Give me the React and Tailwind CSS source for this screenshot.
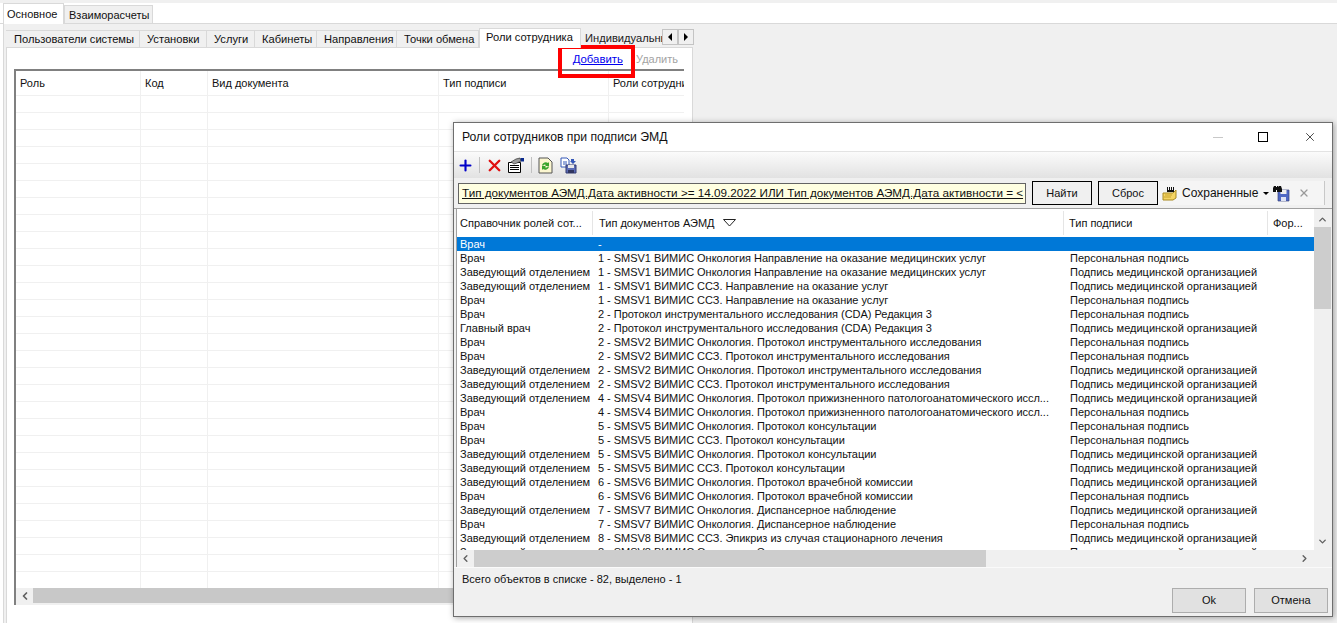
import { ChevronLeft, ChevronRight, ChevronUp, ChevronDown, X, Plus } from "lucide-react";

const ZAV = "Заведующий отделением";
const VR = "Врач";
const PERS = "Персональная подпись";
const MED = "Подпись медицинской организацией";
const ONK4 = "4 - SMSV4 ВИМИС Онкология. Протокол прижизненного патологоанатомического иссл...";

const rows = [
  [VR, "-", ""],
  [VR, "1 - SMSV1 ВИМИС Онкология Направление на оказание медицинских услуг", PERS],
  [ZAV, "1 - SMSV1 ВИМИС Онкология Направление на оказание медицинских услуг", MED],
  [ZAV, "1 - SMSV1 ВИМИС ССЗ. Направление на оказание услуг", MED],
  [VR, "1 - SMSV1 ВИМИС ССЗ. Направление на оказание услуг", PERS],
  [VR, "2 - Протокол инструментального исследования (CDA) Редакция 3", PERS],
  ["Главный врач", "2 - Протокол инструментального исследования (CDA) Редакция 3", MED],
  [VR, "2 - SMSV2 ВИМИС Онкология. Протокол инструментального исследования", PERS],
  [VR, "2 - SMSV2 ВИМИС ССЗ. Протокол инструментального исследования", PERS],
  [ZAV, "2 - SMSV2 ВИМИС Онкология. Протокол инструментального исследования", MED],
  [ZAV, "2 - SMSV2 ВИМИС ССЗ. Протокол инструментального исследования", MED],
  [ZAV, ONK4, MED],
  [VR, ONK4, PERS],
  [VR, "5 - SMSV5 ВИМИС Онкология. Протокол консультации", PERS],
  [VR, "5 - SMSV5 ВИМИС ССЗ. Протокол консультации", PERS],
  [ZAV, "5 - SMSV5 ВИМИС Онкология. Протокол консультации", MED],
  [ZAV, "5 - SMSV5 ВИМИС ССЗ. Протокол консультации", MED],
  [ZAV, "6 - SMSV6 ВИМИС Онкология. Протокол врачебной комиссии", MED],
  [VR, "6 - SMSV6 ВИМИС Онкология. Протокол врачебной комиссии", PERS],
  [ZAV, "7 - SMSV7 ВИМИС Онкология. Диспансерное наблюдение", MED],
  [VR, "7 - SMSV7 ВИМИС Онкология. Диспансерное наблюдение", PERS],
  [ZAV, "8 - SMSV8 ВИМИС ССЗ. Эпикриз из случая стационарного лечения", MED],
  [ZAV, "8 - SMSV8 ВИМИС Онкология. Эпикриз из случая стационарного лечения", MED],
];

const innerTabs = [
  ["Пользователи системы", "w-[134px] pl-[8px]"],
  ["Установки", "w-[67px] pl-[7px]"],
  ["Услуги", "w-[48px] pl-[7px]"],
  ["Кабинеты", "w-[62px] pl-[7px]"],
  ["Направления", "w-[80px] pl-[7px]"],
  ["Точки обмена", "w-[82px] pl-[7px]"],
];

const leftColumns = ["w-[125px]", "w-[67px]", "w-[231px]", "w-[170px]", "w-[76px]"];

const TabArrow = ({ children }) => (
  <div className="w-[16px] h-[16px] bg-[#f0f0f0] border border-[#c4c4c4] flex items-center justify-center">
    {children}
  </div>
);

const MainContent = () => (
  <div className="w-full h-[623px] flex flex-col">
    <div className="h-[24px] shrink-0 bg-white border-b border-[#d9d9d9] flex flex-col">
      <div className="h-[3px] shrink-0 bg-[#f0f0f0]" />
      <div className="flex-1 flex items-end pl-[3px]">
        <div className="w-[61px] h-[21px] -mb-px bg-white border border-b-0 border-[#d9d9d9] pl-[3px] pt-[2px] relative">Основное</div>
        <div className="w-[89px] h-[18px] bg-[#f0f0f0] border border-b-0 border-[#d9d9d9] pl-[4px] pt-[1px]">Взаиморасчеты</div>
      </div>
    </div>
    <div className="flex-1 flex min-h-0">
      <div className="w-[3px] bg-white" />
      <div className="w-[691px] border-l border-[#d9d9d9] pl-[2px] pt-[4px] flex flex-col">
        <div className="h-[19px] shrink-0 flex items-end relative z-10 text-[11.15px]">
          {innerTabs.map(([label, width]) => (
            <div key={label} className={`${width} h-[17px] bg-[#f0f0f0] border-r border-t border-[#d9d9d9] leading-[16px] whitespace-nowrap`}>
              {label}
            </div>
          ))}
          <div className="w-[102px] h-[20px] -mb-px bg-white border border-b-0 border-[#d9d9d9] pl-[6px] leading-[17px] whitespace-nowrap">Роли сотрудника</div>
          <div className="w-[81px] h-[17px] overflow-hidden whitespace-nowrap pl-[4px] leading-[17px] text-[#222]">Индивидуальные</div>
          <div className="flex self-start mt-[1px]">
            <TabArrow><span className="w-0 h-0 border-y-[4px] border-y-transparent border-r-[4px] border-r-black" /></TabArrow>
            <TabArrow><span className="w-0 h-0 border-y-[4px] border-y-transparent border-l-[4px] border-l-black" /></TabArrow>
          </div>
        </div>
        <div className="flex-1 w-[687px] bg-white border-l border-t border-r border-[#d9d9d9] pl-[7px] pr-[8px] flex flex-col">
          <div className="h-[21px] shrink-0 flex justify-end items-center gap-[13px] pr-[6px] pt-[2px]">
            <span className="text-[#0000ee] underline text-[11.4px]">Добавить</span>
            <span className="text-[#a3a3a3]">Удалить</span>
          </div>
          <div className="h-[536px] border-l-2 border-t-2 border-[#808080] flex flex-col overflow-hidden">
            <div className="h-[25px] shrink-0 flex border-b border-[#f0f0f0]">
              {["Роль", "Код", "Вид документа", "Тип подписи", "Роли сотрудника"].map((label, i) => (
                <div key={label} className={`${leftColumns[i]} shrink-0 border-r border-[#f0f0f0] pl-[4px] pt-[4px] whitespace-nowrap overflow-hidden`}>
                  {label}
                </div>
              ))}
            </div>
            <div className="flex-1 overflow-hidden">
              {Array.from({ length: 29 }, (_, n) => (
                <div key={n} className="h-[17px] flex border-b border-[#f0f0f0]">
                  {leftColumns.map((w) => (
                    <div key={w} className={`${w} shrink-0 border-r border-[#f0f0f0]`} />
                  ))}
                </div>
              ))}
            </div>
            <div className="h-[15px] shrink-0 bg-[#f0f0f0] flex items-center">
              <div className="w-[17px] flex justify-center">
                <ChevronLeft size={12} strokeWidth={3.5} className="text-[#606060]" />
              </div>
              <div className="h-full flex-1 bg-[#c8c8c8]" />
            </div>
            <div className="h-[2px] shrink-0 bg-[#f0f0f0]" />
          </div>
        </div>
      </div>
    </div>
  </div>
);

const Toolbar = () => (
  <div className="h-[27px] shrink-0 flex items-center pl-[3px] bg-gradient-to-b from-[#fbfbfb] to-[#e2e2e2] border-t border-[#e3e3e3]">
    <Plus size={17} strokeWidth={3} className="text-[#0000c8]" />
    <div className="w-px h-[16px] bg-[#c0c0c0] mx-[5px]" />
    <X size={19} strokeWidth={3} className="text-[#e01010]" />
    <svg width="18" height="17" viewBox="0 0 18 17" className="ml-[3px]">
      <path d="M1.500 5.500h12v10h-12z" fill="#fff" stroke="#000" />
      <path d="M3 8.500h9M3 10.500h9M3 12.500h9" stroke="#000" />
      <path d="M4 5l5-3 4-1 1 3-4 2-3 1z" fill="#9a9a9a" stroke="#333" strokeWidth=".7" />
      <path d="M13.500 1H17v3.500h-3z" fill="#0a2a8e" />
    </svg>
    <div className="w-px h-[16px] bg-[#c0c0c0] mx-[6px]" />
    <svg width="15" height="17" viewBox="0 0 15 17">
      <path d="M1 1h9l4 4v11H1z" fill="#fbf6d0" stroke="#555" />
      <path d="M4 8a4 4 0 0 1 6-2l1-1v4H7l1-1a2 2 0 0 0-3 1z" fill="#3aa52c" />
      <path d="M11 10a4 4 0 0 1-6 2l-1 1V9h4l-1 1a2 2 0 0 0 3-1z" fill="#3aa52c" />
    </svg>
    <svg width="17" height="17" viewBox="0 0 17 17" className="ml-[7px]">
      <path d="M1 1h6l2 2v7H1z" fill="#fff" stroke="#3558b8" />
      <path d="M3 5h4M3 7h4" stroke="#3558b8" />
      <path d="M6 8h10v8H6z" fill="#5b6bb5" stroke="#333a70" />
      <path d="M8 8h6v3H8z" fill="#e8e8e8" />
      <path d="M8 13h6v3H8z" fill="#30355f" />
      <path d="M11 2h3v2h2l-3 3-3-3h1z" fill="#3558b8" />
    </svg>
  </div>
);

const FilterRow = () => (
  <div className="h-[31px] shrink-0 flex items-center bg-[#f0f0f0] border-b border-[#a0a0a0] pl-[4px]">
    <div className="w-[568px] h-[21px] bg-[#ffffe1] border border-[#646464] pl-[3px] overflow-hidden whitespace-nowrap leading-[18px] text-[11.7px]">
      <span className="underline">Тип документов АЭМД.Дата активности &gt;= 14.09.2022 ИЛИ Тип документов АЭМД.Дата активности = &lt;</span>
    </div>
    <div className="w-[60px] h-[24px] ml-[6px] border border-black bg-[#f0f0f0] flex items-center justify-center">Найти</div>
    <div className="w-[60px] h-[24px] ml-[6px] border border-black bg-[#f0f0f0] flex items-center justify-center">Сброс</div>
    <div className="w-[167px] h-[24px] bg-[#f5f5f5] border-r border-[#c8c8c8] flex items-center pl-[4px] text-[12px]">
      <svg width="17" height="15" viewBox="0 0 17 15">
        <path d="M1 7h10l3-3v8l-3 2H1z" fill="#f5d565" stroke="#a98a20" />
        <path d="M5 1h1v3h1V1h1v3h1V1h1v3h1V1h1v5H5z" fill="#111" />
        <path d="M3 9h7M2 11h7" stroke="#c9a52e" />
      </svg>
      <span className="ml-[3px]">Сохраненные</span>
      <span className="ml-[5px] w-0 h-0 border-x-[3px] border-x-transparent border-t-[3px] border-t-black" />
      <svg width="17" height="17" viewBox="0 0 17 17" className="ml-[4px]">
        <path d="M5 5h11v11H5z" fill="#4f68c4" stroke="#39467f" strokeWidth=".7" />
        <path d="M7.500 5h6v4h-6z" fill="#eee" />
        <path d="M8 12h5v4H8z" fill="#dfe3f3" />
        <path d="M1 1h2v1h1V1h1v6H4V5H3v2H0V3z" fill="#111" />
        <path d="M6 1h2l1 3v3H5V2z" fill="#111" />
      </svg>
      <X size={12} strokeWidth={2.5} className="text-[#9a9a9a] ml-[8px]" />
    </div>
  </div>
);

const Dialog = () => (
  <div className="absolute left-[453px] top-[122px] w-[880px] h-[495px] bg-[#f0f0f0] border border-[#6e6e6e] shadow-[1px_1px_6px_rgba(0,0,0,0.35)] flex flex-col">
    <div className="h-[28px] shrink-0 bg-white flex items-center pl-[8px] pr-[15px] text-[12.2px] leading-none">
      <span>Роли сотрудников при подписи ЭМД</span>
      <div className="ml-auto flex items-center">
        <div className="w-[10px] h-px bg-[#c8c8c8]" />
        <div className="w-[10px] h-[10px] border border-black ml-[35px]" />
        <X size={14} strokeWidth={1.2} className="ml-[35px] text-black" />
      </div>
    </div>
    <Toolbar />
    <FilterRow />
    <div className="h-[358px] shrink-0 flex flex-col bg-white ml-[2px] mr-[1px] border-l border-[#a0a0a0]">
      <div className="flex-1 flex min-h-0">
        <div className="flex-1 min-w-0 flex flex-col">
          <div className="h-[28px] shrink-0 flex items-center">
            <div className="w-[136px] h-[24px] flex items-center border-r border-[#e5e5e5] pl-[3px] whitespace-nowrap">Справочник ролей сот...</div>
            <div className="w-[471px] h-[24px] flex items-center border-r border-[#e5e5e5] pl-[6px]">
              Тип документов АЭМД
              <svg width="13" height="8" viewBox="0 0 13 8" className="ml-[8px]"><path d="M.5.5h12L6.5 7z" fill="#fff" stroke="#222" /></svg>
            </div>
            <div className="w-[204px] h-[24px] flex items-center border-r border-[#e5e5e5] pl-[5px]">Тип подписи</div>
            <div className="pl-[5px] whitespace-nowrap">Фор...</div>
          </div>
          <div className="flex-1 overflow-hidden">
            {rows.map((row, i) => (
              <div key={i} className={`h-[14px] flex items-center whitespace-nowrap leading-[14px] ${i === 0 ? "bg-[#0078d7] text-white" : ""}`}>
                <div className="w-[136px] pl-[3px] shrink-0">{row[0]}</div>
                <div className="w-[472px] pl-[5px] shrink-0 tracking-[-0.03px]">{row[1]}</div>
                <div className="pl-[5px]">{row[2]}</div>
              </div>
            ))}
          </div>
        </div>
        <div className="w-[17px] shrink-0 bg-[#f0f0f0] flex flex-col items-center">
          <ChevronUp size={11} strokeWidth={3} className="text-[#606060] mt-[5px] mb-[2px]" />
          <div className="w-full h-[82px] bg-[#cdcdcd]" />
          <ChevronDown size={11} strokeWidth={3} className="text-[#606060] mt-auto mb-[3px]" />
        </div>
      </div>
      <div className="h-[17px] shrink-0 bg-[#f0f0f0] flex items-center">
        <ChevronLeft size={11} strokeWidth={3} className="text-[#606060] mx-[3px]" />
        <div className="w-[512px] h-full bg-[#cdcdcd]" />
        <ChevronRight size={11} strokeWidth={3} className="text-[#606060] ml-auto mr-[21px]" />
      </div>
    </div>
    <div className="flex-1 border-t border-[#fafafa] flex flex-col pl-[8px] pt-[3px]">
      <div>Всего объектов в списке - 82, выделено - 1</div>
      <div className="mt-auto mb-[5px] flex justify-end gap-[8px] pr-[4px]">
        <div className="w-[74px] h-[25px] bg-[#e1e1e1] border border-[#adadad] flex items-center justify-center">Ok</div>
        <div className="w-[74px] h-[25px] bg-[#e1e1e1] border border-[#adadad] flex items-center justify-center">Отмена</div>
      </div>
    </div>
  </div>
);

export default function App() {
  return (
    <div className="relative w-[1337px] h-[623px] overflow-hidden bg-[#f0f0f0] text-[11px] text-[#111] font-['Liberation_Sans',Arial,sans-serif]">
      <MainContent />
      {/* красная рамка вокруг кнопки */}
      <div className="absolute left-[558px] top-[45px] w-[77px] h-[33px] border-[4px] border-[#ff0000]" />
      <Dialog />
    </div>
  );
}
